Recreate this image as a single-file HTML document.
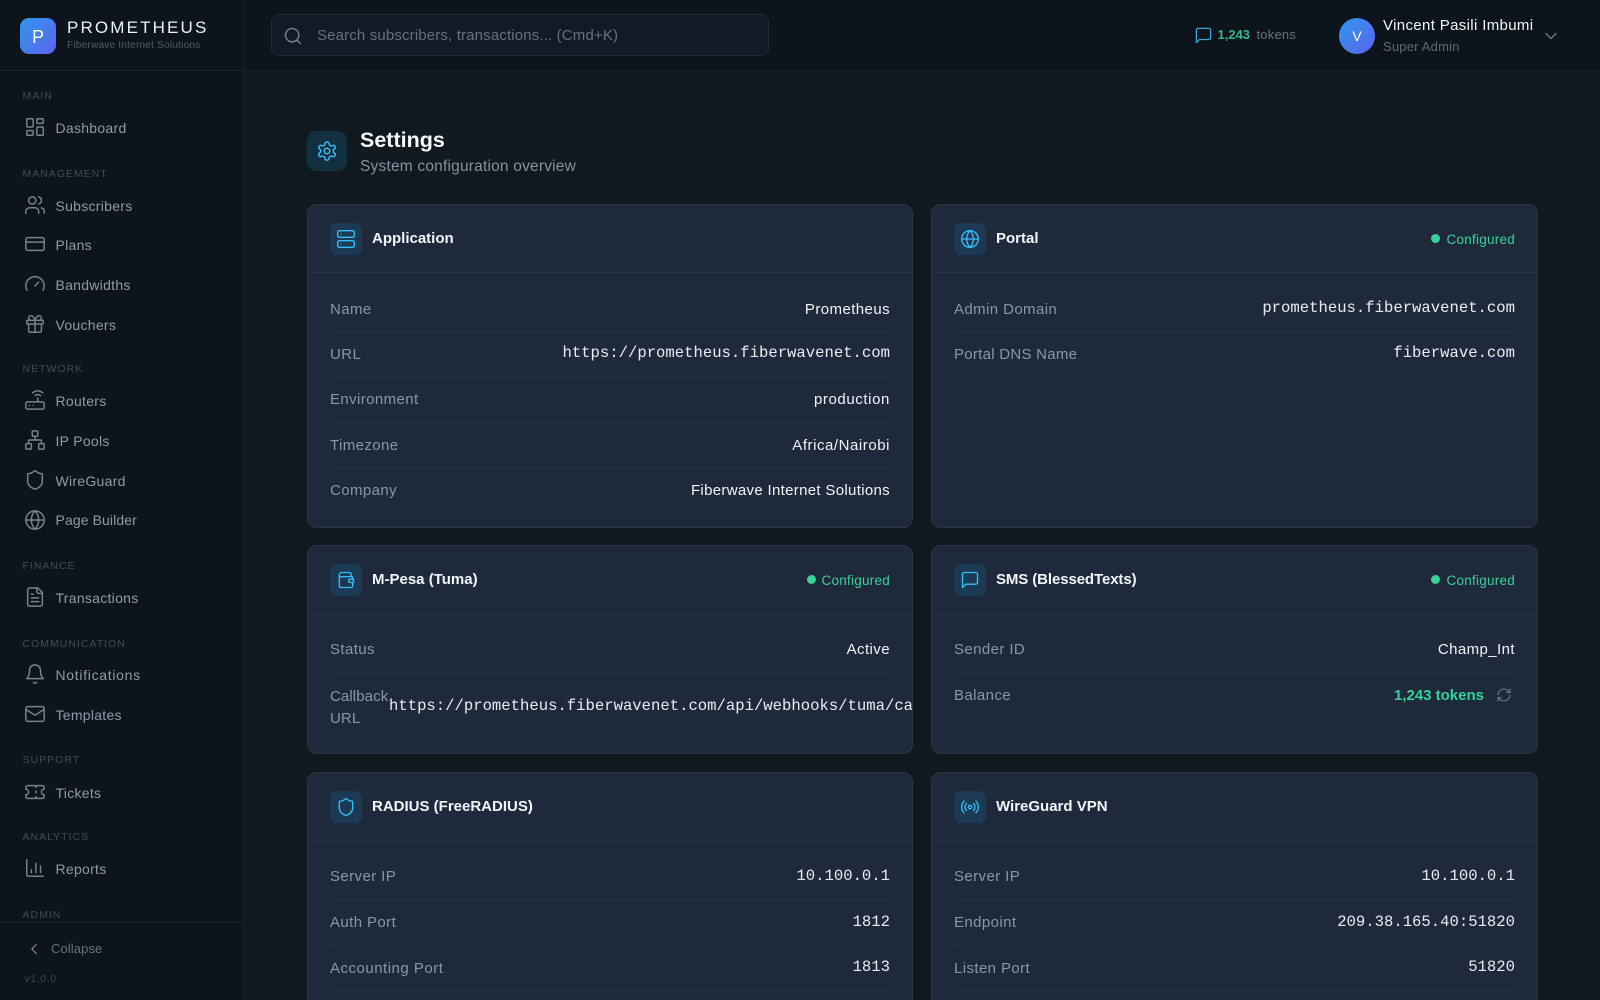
<!DOCTYPE html>
<html lang="en">
<head>
<meta charset="utf-8">
<title>Settings - Prometheus</title>
<style>
*{box-sizing:border-box;margin:0;padding:0}
html,body{width:1600px;height:1000px;overflow:hidden;background:#111920;font-family:"Liberation Sans",sans-serif}
#app{position:relative;width:1600px;height:1000px;overflow:hidden;background:#111920}
svg{fill:none;stroke:currentColor;stroke-width:1.6;stroke-linecap:round;stroke-linejoin:round;position:absolute;display:block}
.a{position:absolute}
.t{position:absolute;white-space:nowrap;line-height:20px;height:20px}
#side{position:absolute;left:0;top:0;width:244px;height:1000px;background:#0d141c;border-right:1px solid #1a242e;overflow:hidden}
#head{position:absolute;left:244px;top:0;width:1356px;height:71px;background:#0d141c;border-bottom:1px solid #1a242e}
.lab{position:absolute;left:22.5px;white-space:nowrap;line-height:14px;font-size:10.5px;letter-spacing:1px;color:#414c5b}
.nav{position:absolute;left:55.5px;white-space:nowrap;line-height:20px;font-size:14px;color:#8f9bab;letter-spacing:.28px}
.ico{color:#78838f;left:23.5px;width:22px;height:22px}
.card{position:absolute;width:606px;background:#1e293b;border:1px solid #2b3648;border-radius:10px;overflow:hidden}
.r{width:607px}
.hb{position:absolute;left:0;right:0;height:1px;background:#2a3547}
.box{position:absolute;left:22px;top:18px;width:32px;height:32px;border-radius:7px;background:#1c3a53;color:#38bdf8}
.box svg{left:6px;top:6px;width:20px;height:20px}
.ttl{position:absolute;left:64px;top:21px;line-height:26px;font-size:15px;font-weight:700;color:#f1f5f9;white-space:nowrap}
.cfg{position:absolute;right:22px;top:25px;line-height:20px;font-size:13.5px;color:#34d399;white-space:nowrap;letter-spacing:.25px}
.dot{position:absolute;width:9px;height:9px;border-radius:50%;background:#34d399;top:29px}
.k{position:absolute;left:22px;line-height:20px;font-size:15px;color:#8b97a8;white-space:nowrap;letter-spacing:.4px}
.v{position:absolute;right:22px;line-height:20px;font-size:15px;color:#f1f5f9;white-space:nowrap;letter-spacing:.42px}
.m{font-family:"Liberation Mono",monospace;font-size:15.6px;color:#e8edf3;letter-spacing:0}
.d{position:absolute;left:22px;right:22px;height:1px;background:#243042}
</style>
</head>
<body>
<svg width="0" height="0" style="position:absolute">
<defs>
<symbol id="i-dash" viewBox="0 0 24 24"><rect x="3" y="3" width="7" height="9" rx="1"/><rect x="14" y="3" width="7" height="5" rx="1"/><rect x="14" y="12" width="7" height="9" rx="1"/><rect x="3" y="16" width="7" height="5" rx="1"/></symbol>
<symbol id="i-users" viewBox="0 0 24 24"><path d="M16 21v-2a4 4 0 0 0-4-4H6a4 4 0 0 0-4 4v2"/><circle cx="9" cy="7" r="4"/><path d="M22 21v-2a4 4 0 0 0-3-3.87"/><path d="M16 3.13a4 4 0 0 1 0 7.75"/></symbol>
<symbol id="i-card" viewBox="0 0 24 24"><rect x="2" y="5" width="20" height="14" rx="2"/><path d="M2 10h20"/></symbol>
<symbol id="i-gauge" viewBox="0 0 24 24"><path d="m12 14 4-4"/><path d="M3.34 19a10 10 0 1 1 17.32 0"/></symbol>
<symbol id="i-gift" viewBox="0 0 24 24"><rect x="3" y="8" width="18" height="4" rx="1"/><path d="M12 8v13"/><path d="M19 12v7a2 2 0 0 1-2 2H7a2 2 0 0 1-2-2v-7"/><path d="M7.5 8a2.5 2.5 0 0 1 0-5A4.8 8 0 0 1 12 8a4.8 8 0 0 1 4.5-5 2.5 2.5 0 0 1 0 5"/></symbol>
<symbol id="i-router" viewBox="0 0 24 24"><rect x="2" y="14" width="20" height="8" rx="2"/><path d="M6.01 18H6"/><path d="M10.01 18H10"/><path d="M15 10v4"/><path d="M17.84 7.17a4 4 0 0 0-5.66 0"/><path d="M20.66 4.34a8 8 0 0 0-11.31 0"/></symbol>
<symbol id="i-net" viewBox="0 0 24 24"><rect x="16" y="16" width="6" height="6" rx="1"/><rect x="2" y="16" width="6" height="6" rx="1"/><rect x="9" y="2" width="6" height="6" rx="1"/><path d="M5 16v-3a1 1 0 0 1 1-1h12a1 1 0 0 1 1 1v3"/><path d="M12 12V8"/></symbol>
<symbol id="i-shield" viewBox="0 0 24 24"><path d="M20 13c0 5-3.5 7.5-7.66 8.95a1 1 0 0 1-.67-.01C7.5 20.5 4 18 4 13V6a1 1 0 0 1 1-1c2 0 4.5-1.2 6.24-2.72a1.17 1.17 0 0 1 1.52 0C14.51 3.81 17 5 19 5a1 1 0 0 1 1 1z"/></symbol>
<symbol id="i-globe" viewBox="0 0 24 24"><circle cx="12" cy="12" r="10"/><path d="M12 2a14.5 14.5 0 0 0 0 20 14.5 14.5 0 0 0 0-20"/><path d="M2 12h20"/></symbol>
<symbol id="i-file" viewBox="0 0 24 24"><path d="M15 2H6a2 2 0 0 0-2 2v16a2 2 0 0 0 2 2h12a2 2 0 0 0 2-2V7Z"/><path d="M14 2v4a2 2 0 0 0 2 2h4"/><path d="M10 9H8"/><path d="M16 13H8"/><path d="M16 17H8"/></symbol>
<symbol id="i-bell" viewBox="0 0 24 24"><path d="M6 8a6 6 0 0 1 12 0c0 7 3 9 3 9H3s3-2 3-9"/><path d="M10.3 21a1.94 1.94 0 0 0 3.4 0"/></symbol>
<symbol id="i-mail" viewBox="0 0 24 24"><rect x="2" y="4" width="20" height="16" rx="2"/><path d="m22 7-8.97 5.7a1.94 1.94 0 0 1-2.06 0L2 7"/></symbol>
<symbol id="i-ticket" viewBox="0 0 24 24"><path d="M2 9a3 3 0 0 1 0 6v2a2 2 0 0 0 2 2h16a2 2 0 0 0 2-2v-2a3 3 0 0 1 0-6V7a2 2 0 0 0-2-2H4a2 2 0 0 0-2 2Z"/><path d="M13 5v2"/><path d="M13 17v2"/><path d="M13 11v2"/></symbol>
<symbol id="i-chart" viewBox="0 0 24 24"><path d="M3 3v16a2 2 0 0 0 2 2h16"/><path d="M8 17v-3"/><path d="M13 17V7"/><path d="M18 17V10"/></symbol>
<symbol id="i-left" viewBox="0 0 24 24"><path d="m15 18-6-6 6-6"/></symbol>
<symbol id="i-down" viewBox="0 0 24 24"><path d="m6 9 6 6 6-6"/></symbol>
<symbol id="i-search" viewBox="0 0 24 24"><circle cx="11" cy="11" r="8"/><path d="m21 21-4.3-4.3"/></symbol>
<symbol id="i-msg" viewBox="0 0 24 24"><path d="M21 15a2 2 0 0 1-2 2H7l-4 4V5a2 2 0 0 1 2-2h14a2 2 0 0 1 2 2z"/></symbol>
<symbol id="i-gear" viewBox="0 0 24 24"><path d="M12.22 2h-.44a2 2 0 0 0-2 2v.18a2 2 0 0 1-1 1.73l-.43.25a2 2 0 0 1-2 0l-.15-.08a2 2 0 0 0-2.73.73l-.22.38a2 2 0 0 0 .73 2.73l.15.1a2 2 0 0 1 1 1.72v.51a2 2 0 0 1-1 1.74l-.15.09a2 2 0 0 0-.73 2.73l.22.38a2 2 0 0 0 2.73.73l.15-.08a2 2 0 0 1 2 0l.43.25a2 2 0 0 1 1 1.73V20a2 2 0 0 0 2 2h.44a2 2 0 0 0 2-2v-.18a2 2 0 0 1 1-1.73l.43-.25a2 2 0 0 1 2 0l.15.08a2 2 0 0 0 2.73-.73l.22-.39a2 2 0 0 0-.73-2.73l-.15-.08a2 2 0 0 1-1-1.74v-.5a2 2 0 0 1 1-1.74l.15-.09a2 2 0 0 0 .73-2.73l-.22-.38a2 2 0 0 0-2.73-.73l-.15.08a2 2 0 0 1-2 0l-.43-.25a2 2 0 0 1-1-1.73V4a2 2 0 0 0-2-2z"/><circle cx="12" cy="12" r="3"/></symbol>
<symbol id="i-server" viewBox="0 0 24 24"><rect x="2" y="2" width="20" height="8" rx="2"/><rect x="2" y="14" width="20" height="8" rx="2"/><path d="M6 6h.01"/><path d="M6 18h.01"/></symbol>
<symbol id="i-wallet" viewBox="0 0 24 24"><path d="M4 6a3 3 0 0 1 3-3h9a2 2 0 0 1 2 2v3"/><path d="M4 6v13a2 2 0 0 0 2 2h12a2 2 0 0 0 2-2v-3"/><path d="M4 8h15a1 1 0 0 1 1 1v2"/><path d="M20 11h-3a2 2 0 0 0 0 4h4v-4z"/></symbol>
<symbol id="i-radio" viewBox="0 0 24 24"><path d="M4.9 19.1C1 15.2 1 8.8 4.9 4.9"/><path d="M7.8 16.2c-2.3-2.3-2.3-6.1 0-8.5"/><circle cx="12" cy="12" r="2"/><path d="M16.2 7.8c2.3 2.3 2.3 6.1 0 8.5"/><path d="M19.1 4.9C23 8.8 23 15.1 19.1 19"/></symbol>
<symbol id="i-refresh" viewBox="0 0 24 24"><path d="M3 12a9 9 0 0 1 9-9 9.75 9.75 0 0 1 6.74 2.74L21 8"/><path d="M21 3v5h-5"/><path d="M21 12a9 9 0 0 1-9 9 9.75 9.75 0 0 1-6.74-2.74L3 16"/><path d="M8 16H3v5"/></symbol>
</defs>
</svg>

<div id="app">
<aside id="side">
  <div class="a" style="left:20px;top:18px;width:36px;height:36px;border-radius:9px;background:linear-gradient(135deg,#2f98f0,#5a63ea);color:#fff;font-size:18px;line-height:38px;text-align:center">P</div>
  <div class="t" style="left:67px;top:18px;font-size:17px;letter-spacing:2.15px;color:#eef2f6">PROMETHEUS</div>
  <div class="t" style="left:67px;top:36px;font-size:10px;letter-spacing:.24px;color:#4f5b6b">Fiberwave Internet Solutions</div>
  <div class="a" style="left:0;top:70px;width:243px;height:1px;background:#1a242e"></div>

  <div class="lab" style="top:89px">MAIN</div>
  <svg class="ico" style="top:116px"><use href="#i-dash"/></svg><div class="nav" style="top:118px">Dashboard</div>

  <div class="lab" style="top:167px">MANAGEMENT</div>
  <svg class="ico" style="top:194px"><use href="#i-users"/></svg><div class="nav" style="top:196px">Subscribers</div>
  <svg class="ico" style="top:233px"><use href="#i-card"/></svg><div class="nav" style="top:235px">Plans</div>
  <svg class="ico" style="top:273px"><use href="#i-gauge"/></svg><div class="nav" style="top:275px">Bandwidths</div>
  <svg class="ico" style="top:313px"><use href="#i-gift"/></svg><div class="nav" style="top:315px">Vouchers</div>

  <div class="lab" style="top:362px">NETWORK</div>
  <svg class="ico" style="top:389px"><use href="#i-router"/></svg><div class="nav" style="top:391px">Routers</div>
  <svg class="ico" style="top:429px"><use href="#i-net"/></svg><div class="nav" style="top:431px">IP Pools</div>
  <svg class="ico" style="top:469px"><use href="#i-shield"/></svg><div class="nav" style="top:471px">WireGuard</div>
  <svg class="ico" style="top:509px"><use href="#i-globe"/></svg><div class="nav" style="top:510px;letter-spacing:.1px">Page Builder</div>

  <div class="lab" style="top:559px">FINANCE</div>
  <svg class="ico" style="top:586px"><use href="#i-file"/></svg><div class="nav" style="top:588px">Transactions</div>

  <div class="lab" style="top:637px">COMMUNICATION</div>
  <svg class="ico" style="top:663px"><use href="#i-bell"/></svg><div class="nav" style="top:665px;letter-spacing:.7px">Notifications</div>
  <svg class="ico" style="top:703px"><use href="#i-mail"/></svg><div class="nav" style="top:705px">Templates</div>

  <div class="lab" style="top:753px">SUPPORT</div>
  <svg class="ico" style="top:781px"><use href="#i-ticket"/></svg><div class="nav" style="top:783px">Tickets</div>

  <div class="lab" style="top:830px">ANALYTICS</div>
  <svg class="ico" style="top:857px"><use href="#i-chart"/></svg><div class="nav" style="top:859px">Reports</div>

  <div class="lab" style="top:908px">ADMIN</div>

  <div class="a" style="left:0;top:922px;width:243px;height:78px;background:#0d141c;border-top:1px solid #1a242e"></div>
  <svg class="a" style="left:25px;top:940px;width:18px;height:18px;color:#7d8896"><use href="#i-left"/></svg>
  <div class="t" style="left:51px;top:939px;font-size:13px;color:#667180;letter-spacing:.1px">Collapse</div>
  <div class="t" style="left:24.5px;top:969px;font-size:10.5px;color:#3d4856;letter-spacing:.6px">v1.0.0</div>
</aside>

<header id="head">
  <div class="a" style="left:27px;top:14px;width:498px;height:42px;border-radius:8px;background:#121b25;border:1px solid #212c39"></div>
  <svg class="a" style="left:39px;top:26px;width:20px;height:20px;color:#7d8896"><use href="#i-search"/></svg>
  <div class="t" style="left:73px;top:26px;font-size:15px;color:#667180;letter-spacing:.15px">Search subscribers, transactions... (Cmd+K)</div>

  <svg class="a" style="left:950px;top:26px;width:19px;height:19px;color:#38a4da"><use href="#i-msg"/></svg>
  <div class="t" style="left:973.5px;top:25px;font-size:13px;font-weight:700;color:#34b78a">1,243</div>
  <div class="t" style="left:1012.5px;top:25px;font-size:13px;color:#667180;letter-spacing:.2px">tokens</div>

  <div class="a" style="left:1095px;top:18px;width:36px;height:36px;border-radius:50%;background:linear-gradient(135deg,#2f98f0,#5a63ea);color:#fff;font-size:14px;line-height:36px;text-align:center">V</div>
  <div class="t" style="left:1139px;top:16px;font-size:15px;color:#f1f5f9;letter-spacing:.35px">Vincent Pasili Imbumi</div>
  <div class="t" style="left:1139px;top:37px;font-size:13px;color:#5f6a79;letter-spacing:.2px">Super Admin</div>
  <svg class="a" style="left:1297px;top:26px;width:20px;height:20px;color:#6d7886"><use href="#i-down"/></svg>
</header>

<main>
  <div class="a" style="left:307px;top:131px;width:40px;height:40px;border-radius:9px;background:#12303f;color:#38bdf8"><svg style="left:9px;top:9px;width:22px;height:22px"><use href="#i-gear"/></svg></div>
  <div class="t" style="left:360px;top:130px;font-size:21.5px;line-height:20px;font-weight:700;color:#f8fafc">Settings</div>
  <div class="t" style="left:360px;top:157px;font-size:15.5px;color:#8592a3;letter-spacing:.2px">System configuration overview</div>

  <section class="card" style="left:307px;top:204px;height:324px">
    <div class="box"><svg><use href="#i-server"/></svg></div><div class="ttl">Application</div>
    <div class="hb" style="top:67px"></div>
    <div class="k" style="top:95px">Name</div><div class="v" style="top:95px">Prometheus</div><div class="d" style="top:126px"></div>
    <div class="k" style="top:140px">URL</div><div class="v m" style="top:138px">https://prometheus.fiberwavenet.com</div><div class="d" style="top:172px"></div>
    <div class="k" style="top:185px">Environment</div><div class="v" style="top:185px;letter-spacing:.6px">production</div><div class="d" style="top:217px"></div>
    <div class="k" style="top:231px">Timezone</div><div class="v" style="top:231px;letter-spacing:.55px">Africa/Nairobi</div><div class="d" style="top:263px"></div>
    <div class="k" style="top:276px">Company</div><div class="v" style="top:276px;letter-spacing:.32px">Fiberwave Internet Solutions</div>
  </section>

  <section class="card r" style="left:931px;top:204px;height:324px">
    <div class="box"><svg><use href="#i-globe"/></svg></div><div class="ttl">Portal</div>
    <div class="dot" style="left:499px"></div><div class="cfg">Configured</div>
    <div class="hb" style="top:67px"></div>
    <div class="k" style="top:95px">Admin Domain</div><div class="v m" style="top:93px">prometheus.fiberwavenet.com</div><div class="d" style="top:126px"></div>
    <div class="k" style="top:140px;letter-spacing:.27px">Portal DNS Name</div><div class="v m" style="top:138px">fiberwave.com</div>
  </section>

  <section class="card" style="left:307px;top:545px;height:209px">
    <div class="box"><svg><use href="#i-wallet"/></svg></div><div class="ttl">M-Pesa (Tuma)</div>
    <div class="dot" style="left:499px"></div><div class="cfg">Configured</div>
    <div class="hb" style="top:68px"></div>
    <div class="k" style="top:94px">Status</div><div class="v" style="top:94px">Active</div><div class="d" style="top:127px"></div>
    <div class="k" style="top:140px;line-height:21.5px;white-space:normal;width:60px;letter-spacing:.1px">Callback URL</div>
    <div class="v m" style="left:81px;right:auto;top:150px">https://prometheus.fiberwavenet.com/api/webhooks/tuma/callback</div>
  </section>

  <section class="card r" style="left:931px;top:545px;height:209px">
    <div class="box"><svg><use href="#i-msg"/></svg></div><div class="ttl" style="letter-spacing:-.1px">SMS (BlessedTexts)</div>
    <div class="dot" style="left:499px"></div><div class="cfg">Configured</div>
    <div class="hb" style="top:68px"></div>
    <div class="k" style="top:94px">Sender ID</div><div class="v" style="top:94px">Champ_Int</div><div class="d" style="top:127px"></div>
    <div class="k" style="top:140px">Balance</div>
    <div class="v" style="top:140px;right:53px;color:#34d399;font-weight:700;letter-spacing:0">1,243 tokens</div>
    <svg style="left:564px;top:141px;width:16px;height:16px;color:#6f7b8b"><use href="#i-refresh"/></svg>
  </section>

  <section class="card" style="left:307px;top:772px;height:260px">
    <div class="box"><svg><use href="#i-shield"/></svg></div><div class="ttl">RADIUS (FreeRADIUS)</div>
    <div class="hb" style="top:68px"></div>
    <div class="k" style="top:94px">Server IP</div><div class="v m" style="top:93px">10.100.0.1</div><div class="d" style="top:127px"></div>
    <div class="k" style="top:140px">Auth Port</div><div class="v m" style="top:139px">1812</div><div class="d" style="top:171px"></div>
    <div class="k" style="top:186px;letter-spacing:.5px">Accounting Port</div><div class="v m" style="top:184px">1813</div><div class="d" style="top:217px"></div>
  </section>

  <section class="card r" style="left:931px;top:772px;height:260px">
    <div class="box"><svg><use href="#i-radio"/></svg></div><div class="ttl">WireGuard VPN</div>
    <div class="hb" style="top:68px"></div>
    <div class="k" style="top:94px">Server IP</div><div class="v m" style="top:93px">10.100.0.1</div><div class="d" style="top:127px"></div>
    <div class="k" style="top:140px">Endpoint</div><div class="v m" style="top:139px">209.38.165.40:51820</div><div class="d" style="top:171px"></div>
    <div class="k" style="top:186px">Listen Port</div><div class="v m" style="top:184px">51820</div><div class="d" style="top:217px"></div>
  </section>
</main>
</div>
</body>
</html>
